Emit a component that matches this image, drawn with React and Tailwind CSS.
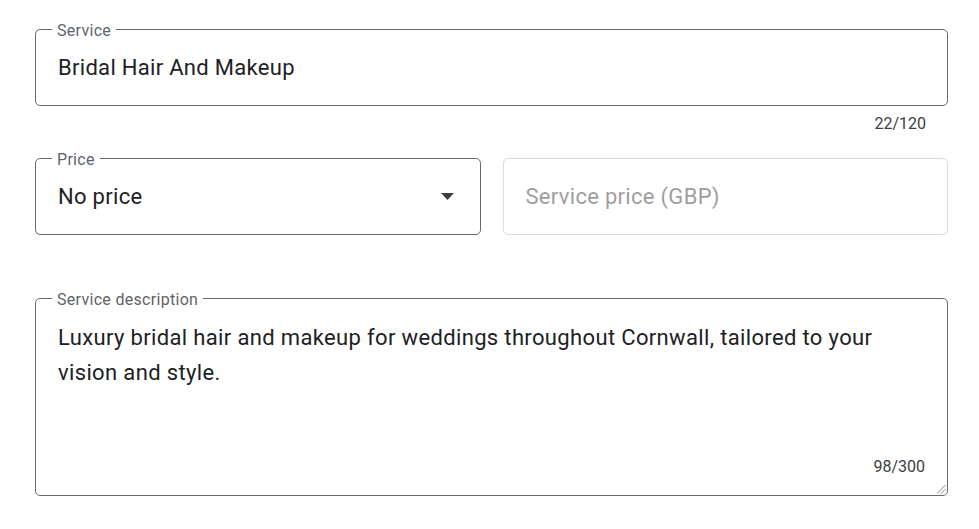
export default function App() {
  return (
    <div className="w-[979px] h-[529px] bg-white pl-[35px] pt-[29px] font-['Roboto',sans-serif] text-[#202124]">
      <div className="w-[913px] flex flex-col">
        {/* Service name */}
        <div className="relative h-[77px] rounded-[5px] border border-[#666a6e] px-[22px] flex items-center">
          <span className="absolute left-[16px] top-[-9px] bg-white px-[5px] text-[16px] leading-[20px] tracking-[0.3px] text-[#5f6368]">
            Service
          </span>
          <span className="text-[22px] leading-[30px] tracking-[0.3px]">Bridal Hair And Makeup</span>
        </div>
        <div className="mt-[8px] pr-[22px] text-right text-[16px] leading-[20px] text-[#3c4043]">22/120</div>

        {/* Price */}
        <div className="mt-[24px] grid grid-cols-2 gap-[22px]">
          <div className="relative h-[77px] rounded-[5px] border border-[#666a6e] pl-[22px] pr-[26px] flex items-center justify-between">
            <span className="absolute left-[16px] top-[-9px] bg-white px-[5px] text-[16px] leading-[20px] tracking-[0.3px] text-[#5f6368]">
              Price
            </span>
            <span className="text-[22px] leading-[30px] tracking-[0.3px]">No price</span>
            <svg width="13" height="7" viewBox="0 0 13 7" className="mt-[-1px]">
              <polygon points="0,0 13,0 6.5,7" fill="#3c4043" />
            </svg>
          </div>
          <div className="h-[77px] rounded-[5px] border border-[#dadce0] pl-[22px] flex items-center">
            <span className="text-[22px] leading-[30px] tracking-[0.3px] text-[#9e9e9e]">Service price (GBP)</span>
          </div>
        </div>

        {/* Description */}
        <div className="relative mt-[63px] h-[198px] rounded-[5px] border border-[#666a6e] px-[22px] pt-[21px] pb-[18px] flex flex-col justify-between">
          <span className="absolute left-[16px] top-[-9px] bg-white px-[5px] text-[16px] leading-[20px] tracking-[0.3px] text-[#5f6368]">
            Service description
          </span>
          <div className="text-[22px] leading-[35px] tracking-[0.35px] whitespace-nowrap">
            <div>Luxury bridal hair and makeup for weddings throughout Cornwall, tailored to your</div>
            <div>vision and style.</div>
          </div>
          <div className="text-right text-[16px] leading-[20px] text-[#3c4043]">98/300</div>
          <svg width="10" height="10" viewBox="0 0 10 10" className="absolute right-[1px] bottom-[1px]">
            <line x1="9.5" y1="1" x2="1" y2="9.5" stroke="#8a8a8a" strokeWidth="1" />
            <line x1="9.5" y1="5" x2="5" y2="9.5" stroke="#8a8a8a" strokeWidth="1" />
          </svg>
        </div>
      </div>
    </div>
  );
}
